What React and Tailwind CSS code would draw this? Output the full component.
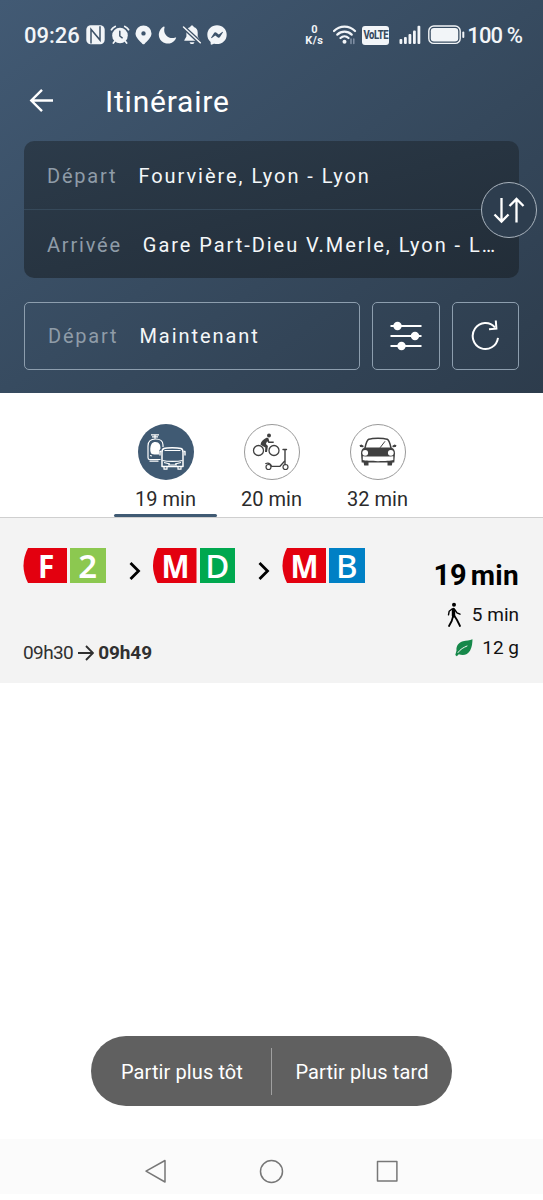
import { FaFacebookMessenger } from 'react-icons/fa';

const MODES = [
  { id: 'transit', label: '19 min', icon: <TransitIcon />, active: true },
  { id: 'bike', label: '20 min', icon: <BikeIcon /> },
  { id: 'car', label: '32 min', icon: <CarIcon /> },
];

const LEGS = [
  { type: 'F', line: '2', color: 'bg-[#8cc850]', weight: 'font-semibold' },
  { type: 'M', line: 'D', color: 'bg-[#00a84f]', weight: 'font-medium' },
  { type: 'M', line: 'B', color: 'bg-[#0080c5]', weight: 'font-medium' },
];

function TransitIcon() {
  return (
    <svg width="56" height="56" viewBox="0 0 56 56" fill="none" stroke="#fff" strokeWidth="1.2" strokeLinejoin="round">
      <path d="M13 10.8h8M14 12.8h6M17 10.8v4" />
      <path d="M22.5 35.5h-11c-1 0-1.500-.8-1.500-2V22c0-5 3-7 7.500-7s7.500 2 7.500 6v2" />
      <path d="M13.500 20c1-1.500 2.300-2 4-2s3.500.8 4.300 2.500c.7 2 .7 3 .7 4-2 2.500-1.500 4-1.500 6-4 0-6.500.3-8-1.200-1.300-3-.8-6.800.5-9.300z" fill="#fff" stroke="none" />
      <path d="M11.500 37.200h9M12 31.500l2 .5" />
      <path d="M26 24.500c3-1 13-1 17 0 1.500.5 2 2 2 4v14H24v-14c0-2 .5-3.500 2-4z" strokeWidth="1.500" fill="#405a73" />
      <path d="M26.500 26.500h16M24.500 36.500c5 1.200 15 1.200 20 0M26 38.500l6 1.500M43 38.500l-6 1.500M30 41h9" />
      <path d="M23.500 27.500h-1.500v4M45.500 27.500H47v4" strokeWidth="1.400" />
      <path d="M26 43v2.200h3V43M40 43v2.200h3V43" />
    </svg>
  );
}

function BikeIcon() {
  return (
    <svg width="56" height="56" viewBox="0 0 56 56" fill="none" stroke="#404040" strokeLinecap="round" strokeLinejoin="round">
      <circle cx="14.500" cy="26.500" r="5" strokeWidth="1.300" />
      <circle cx="30" cy="26.500" r="5" strokeWidth="1.300" />
      <circle cx="25" cy="11.500" r="2" fill="#404040" stroke="none" />
      <path d="M16.500 20.500c.5-3 3-5.500 6-6.700.8-.4 1.800 0 2 .8l.8 2.800h4.400v1.500h-5.200l-1.400-1.700-1.200 2.800 2 2-.9 6h-2l.3-4.600-3.500-1.800z" fill="#404040" stroke="none" />
      <path d="M42.500 25.500h-3.500M41 25.800v15" strokeWidth="1.400" />
      <circle cx="24.500" cy="43" r="2.500" strokeWidth="1.200" />
      <circle cx="41.500" cy="43" r="2.500" strokeWidth="1.200" />
      <path d="M21.800 39.500c2.700-.8 4.700 0 5.700 2.800h8.500l4.500-5" strokeWidth="1.300" />
    </svg>
  );
}

function CarIcon() {
  return (
    <svg width="56" height="56" viewBox="0 0 56 56" fill="none" stroke="#404040">
      <path d="M15 24c1-5 2.300-8 3.800-8.700 4-1.500 14.400-1.500 18.400 0 1.500.7 2.800 3.700 3.800 8.700" strokeWidth="1.500" />
      <path d="M35 17.300l-5 6.500" strokeWidth="1" />
      <path d="M14.500 23.500h27c2.500 1.300 3.500 3 3.500 6l-.7 9H11.700L11 29.500c0-3 1-4.700 3.500-6z" fill="#404040" stroke="none" />
      <path d="M12.800 32.300c4 .4 26.500.4 30.500 0v3.700c-4 1.500-26.500 1.500-30.500 0z" fill="#fff" stroke="none" />
      <circle cx="15.200" cy="28.800" r="2.900" fill="#fff" stroke="none" />
      <circle cx="40.800" cy="28.800" r="2.900" fill="#fff" stroke="none" />
      <path d="M13.500 38h5v3.400h-4.300zM37.500 38h5l-.7 3.400h-4.300z" fill="#404040" stroke="none" />
      <path d="M13.500 23.300l-3.300-.3-.7-1.800 2-.8 2 1.300zM42.500 23.300l3.300-.3.700-1.800-2-.8-2 1.300z" fill="#404040" stroke="none" />
    </svg>
  );
}

function StatusBar() {
  return (
    <div className="flex h-[70px] items-center pl-6 text-[22px] font-medium text-[#f2f5f8]">
      <span className="w-[62px]">09:26</span>
      {/* Notifications */}
      <div className="flex items-center gap-[5px]">
        <svg width="19" height="20" viewBox="0 0 19 20">
          <rect x=".3" y=".3" width="18.400" height="19" rx="4.500" fill="currentColor" />
          <path d="M5 18.500V4.200l8 9.600M14 1.200v14L6 5.600" fill="none" stroke="#3d5268" strokeWidth="1.500" />
        </svg>
        <svg width="20" height="20" viewBox="0 0 21 20" fill="none" stroke="currentColor" strokeWidth="1.800" strokeLinecap="round">
          <circle cx="10.500" cy="10.500" r="8.200" fill="currentColor" stroke="none" />
          <path d="M1.500 4.500C2.500 2.800 3.700 1.800 5.500 1M19.500 4.500c-1-1.700-2.200-2.700-4-3.500M5 16.500l-1.500 2M16 16.500l1.500 2" />
          <path d="M10.300 6v5l2.500 2" stroke="#3d5268" strokeWidth="1.500" />
        </svg>
        <svg width="17" height="20" viewBox="0 0 17 20">
          <path d="M8.500.5A8 8 0 0 0 .5 8.500c0 4 4.500 7.700 7 10.400.6.600 1.400.6 2 0 2.500-2.700 7-6.400 7-10.400A8 8 0 0 0 8.500.500zm0 5.700a2.200 2.200 0 1 1 0 4.400 2.200 2.200 0 0 1 0-4.400z" fill="currentColor" />
        </svg>
        <svg className="ml-px" width="19" height="20" viewBox="0 0 19 20">
          <path d="M5.700 1.600a9 9 0 1 0 12.400 11.500c.2-.5-.2-.8-.7-.6C10.800 15 4.500 9.300 6.600 2.300c.1-.6-.4-.9-.9-.7z" fill="currentColor" />
        </svg>
        <svg width="20" height="20" viewBox="0 0 20 20">
          <path d="M10 .5c1 0 1.500.6 1.700 1.400 2.600.7 4 2.700 4 5.600v4l2 3.400c.2.500 0 .8-.5.800H2.800c-.5 0-.7-.4-.4-.8l2-3.400v-4c0-2.900 1.300-4.900 3.900-5.600C8.500 1.100 9 .500 10 .500zM7.600 17.200h4.800c-.3 1.200-1.100 1.900-2.400 1.900s-2.100-.7-2.400-1.900z" fill="currentColor" />
          <path d="M1.200 1.800L18.300 17.800" stroke="#3d5268" strokeWidth="4" />
          <path d="M1.500 2L18.300 17.800" stroke="currentColor" strokeWidth="1.500" strokeLinecap="round" />
        </svg>
        <FaFacebookMessenger size={20} />
      </div>

      {/* Connectivity */}
      <div className="ml-auto flex items-center pr-[21px]">
        <div className="mr-[9px] flex w-5 flex-col items-center text-[11px] leading-[11px] font-bold">
          <span>0</span>
          <span className="tracking-[0.500px]">K/s</span>
        </div>
        <svg className="mr-[5px]" width="24" height="20" viewBox="0 0 24 20" fill="none" stroke="currentColor" strokeWidth="2.200" strokeLinecap="round">
          <path d="M1 6c5.800-5.800 15.200-5.800 21 0M4.300 9.600c4-4 10.400-4 14.400 0M7.500 13c2.300-2.300 5.700-2.300 8 0" />
          <circle cx="11.500" cy="16.800" r="2" fill="currentColor" stroke="none" />
          <path d="M18 14v4.500M20.800 14v4.500" stroke="#8796aa" strokeWidth="1.400" />
        </svg>
        <span className="flex h-[19px] w-[27px] items-center justify-center rounded-[3px] bg-[#f2f5f8] text-[#374a5e]">
          <span className="scale-y-125 text-[9.500px] font-extrabold tracking-[-0.400px]">VoLTE</span>
        </span>
        <svg className="ml-[10px]" width="22" height="20" viewBox="0 0 22 20" fill="currentColor">
          <rect x=".5" y="14" width="2.800" height="5" rx="1" />
          <rect x="5" y="12" width="2.800" height="7" rx="1" />
          <rect x="9.500" y="9" width="2.800" height="10" rx="1" />
          <rect x="14" y="5.500" width="2.800" height="13.500" rx="1" />
          <rect x="18.500" y=".8" width="2.800" height="18.200" rx="1" />
        </svg>
        <svg className="mr-[2px] ml-[7px]" width="37" height="20" viewBox="0 0 37 20">
          <rect x=".8" y="1" width="31.400" height="17.400" rx="5" fill="none" stroke="currentColor" strokeWidth="1.400" />
          <rect x="2.800" y="3" width="27.400" height="13.400" rx="3.200" fill="currentColor" />
          <path d="M35.300 7.500v4.500" stroke="currentColor" strokeWidth="2" strokeLinecap="round" />
        </svg>
        <span className="tracking-[-0.900px]">100 %</span>
      </div>
    </div>
  );
}

function Field({ label, value, className = '' }) {
  return (
    <div className={`flex items-center gap-[21px] pl-[23px] text-[20px] whitespace-nowrap ${className}`}>
      <span className="tracking-[1.800px] text-[#8f9ca8]">{label}</span>
      <span className="tracking-[1.950px] text-[#f4f7f9]">{value}</span>
    </div>
  );
}

function LineBadge({ type, line, color, weight }) {
  return (
    <div className="flex h-[35px] gap-[3px] font-['Noto_Sans'] text-[33px] leading-none text-white">
      <span className="flex w-[44px] items-center justify-center bg-[#e3000f] pl-[2px] font-bold [clip-path:path('M5_0Q-4_17.5_5_35H44V0Z')]">
        <span className="scale-x-90">{type}</span>
      </span>
      <span className={`flex w-[35.5px] items-center justify-center ${color} ${weight}`}>{line}</span>
    </div>
  );
}

export default function App() {
  return (
    <div className="flex h-[1200px] w-[543px] flex-col overflow-hidden bg-white font-['Roboto','Liberation_Sans',sans-serif]">
      <header className="flex h-[393px] shrink-0 flex-col bg-linear-to-br from-[#425a74] via-[#374b60] to-[#2d3c4c]">
        <StatusBar />

        <div className="flex h-[60px] items-center pl-[29px] text-white">
          <svg width="25" height="25" viewBox="0 0 25 25" fill="none" stroke="currentColor" strokeWidth="2.400">
            <path d="M24 12.500H2.500M13 1.800L2.300 12.500 13 23.200" />
          </svg>
          <h1 className="mt-[2px] ml-[51px] text-[30px] tracking-[0.800px]">Itinéraire</h1>
        </div>

        {/* Origin / destination */}
        <div className="relative mx-6 mt-[11px] h-[137px] w-[495px] rounded-[10px] bg-linear-to-br from-[#2c3b4a] to-[#222d38]">
          <Field label="Départ" value="Fourvière, Lyon - Lyon" className="h-[69px] border-b border-[#36495a] pt-px" />
          <Field label="Arrivée" value="Gare Part-Dieu V.Merle, Lyon - L…" className="h-[68px] pt-px" />
          <button className="absolute top-[41px] -right-[18px] flex size-14 items-center justify-center rounded-full border border-[#a9b3bd] bg-[#2d3d4e]">
            <svg width="32" height="28" viewBox="0 0 32 28" fill="none" stroke="#fff" strokeWidth="2.300">
              <path d="M8.500 2v23M1.500 18.500l7 7 7-7M23.500 26.500V3M16.500 10l7-7 7 7" />
            </svg>
          </button>
        </div>

        {/* Departure time and filters */}
        <div className="mx-6 mt-6 flex h-[68px] gap-3">
          <Field label="Départ" value="Maintenant" className="w-[336px] rounded-[5px] border border-[#8d9eae]" />
          <button className="flex w-[68px] items-center justify-center rounded-[5px] border border-[#8d9eae]">
            <svg width="32" height="30" viewBox="0 0 32 30" fill="#fff" stroke="#fff" strokeWidth="1.800">
              <path d="M.5 5h31M.5 15h31M.5 25h31" />
              <circle cx="7.500" cy="5" r="3.300" />
              <circle cx="25" cy="15" r="3.300" />
              <circle cx="11.500" cy="25" r="3.300" />
            </svg>
          </button>
          <button className="flex w-[67px] items-center justify-center rounded-[5px] border border-[#8d9eae]">
            <svg width="30" height="32" viewBox="0 0 30 32" fill="none" stroke="#fff" strokeWidth="2">
              <path d="M27 17.800A12.700 13 0 1 1 24 7.500" />
              <path d="M24.800.5l.6 8.200-7.400.6" />
            </svg>
          </button>
        </div>
      </header>

      {/* Transport modes */}
      <nav className="flex h-[125px] shrink-0 justify-center gap-[3px] border-b border-[#cfcfcf] pt-[31px]">
        {MODES.map(m => (
          <div key={m.id} className="flex w-[103px] flex-col items-center">
            <span className={`flex size-14 items-center justify-center rounded-full ${m.active ? 'bg-[#405a73]' : 'border border-[#9a9a9a]'}`}>
              <span className="shrink-0">{m.icon}</span>
            </span>
            <span className="mt-[5px] h-[29px] text-[20px] leading-[29px] text-[#2b2b2b]">{m.label}</span>
            {m.active && <span className="h-[3px] w-full rounded-full bg-[#405a73]" />}
          </div>
        ))}
      </nav>

      {/* Journey */}
      <section className="flex h-[165px] shrink-0 justify-between bg-[#f3f3f3] pr-6 pl-[23px]">
        <div className="flex flex-col">
          <div className="mt-[30px] flex">
            {LEGS.map((leg, i) => (
              <div key={i} className="flex">
                {i > 0 && (
                  <svg className="mt-[13px] mr-3 ml-[23px]" width="12" height="20" viewBox="0 0 12 20" fill="none" stroke="#000" strokeWidth="2.800">
                    <path d="M1.500 2l8 8-8 8" />
                  </svg>
                )}
                <LineBadge {...leg} />
              </div>
            ))}
          </div>
          <div className="mt-[58px] flex items-center text-[19px] leading-6 text-[#303030]">
            <span className="tracking-[-0.600px]">09h30</span>
            <svg className="mr-1 ml-[5px]" width="16" height="16" viewBox="0 0 16 16" fill="none" stroke="currentColor" strokeWidth="1.900">
              <path d="M0 8h14.500M8 1l7 7-7 7" />
            </svg>
            <span className="font-bold tracking-[-0.100px]">09h49</span>
          </div>
        </div>

        <div className="flex flex-col items-end pt-10 text-[19px] text-[#111]">
          <div className="flex items-baseline gap-1 leading-[34px] font-bold text-black">
            <span className="text-[29px]">19</span>
            <span className="text-[28px] tracking-[0.300px]">min</span>
          </div>
          <div className="mt-[6px] flex h-8 items-center gap-[10px]">
            <svg width="16" height="26" viewBox="0 0 16 26" fill="none" stroke="#000" strokeLinecap="round" strokeLinejoin="round">
              <circle cx="8" cy="2.800" r="2" fill="#000" stroke="none" />
              <path d="M7.500 7.500v6.500" strokeWidth="3.400" />
              <path d="M6 7L3.200 9.200l-.7 3.600M9 8l2 2.800 3 1.400" strokeWidth="1.400" />
              <path d="M6.700 15.500l-1 3.500-2.700 5M8.500 14l2.500 4 3 6" strokeWidth="1.800" />
            </svg>
            <span>5 min</span>
          </div>
          <div className="mt-px flex h-8 items-center gap-[9px]">
            <svg width="18" height="18" viewBox="0 0 18 18" fill="#16884a">
              <path d="M17.500.3c-3 1.500-6 1-9.500 2C3.800 3.700 1 6.800 1.500 11.500L.3 16l1.500 1.200 2-2c4.700 1.800 8.900.3 11.200-3.500C17.200 8 17.300 4 17.500.3z" />
              <path d="M3 13.500C5.500 10 8.500 8.500 12 7" fill="none" stroke="#f3f3f3" strokeWidth="1" strokeLinecap="round" />
            </svg>
            <span>12 g</span>
          </div>
        </div>
      </section>

      {/* Earlier / later */}
      <div className="mt-auto mb-[33px] ml-[91px] flex h-[70px] w-[361px] shrink-0 items-center rounded-full bg-[#606060] text-[20px] whitespace-nowrap text-white">
        <button className="w-[180px] pt-px pl-[2px] tracking-[0.100px]">Partir plus tôt</button>
        <span className="h-[47px] w-px bg-[#a0a0a0]" />
        <button className="w-[180px] pt-px tracking-[0.100px]">Partir plus tard</button>
      </div>

      {/* Android navigation */}
      <footer className="mb-[6px] flex h-[55px] shrink-0 justify-center gap-[91px] bg-[#fbfbfb] pt-5">
        {['M22 1.500v21.500L3 12.200z', 'M12.500 1.500a11 11 0 1 1 0 22 11 11 0 0 1 0-22z', 'M2.500 2.500h19.400v19.400H2.500z'].map(d => (
          <svg key={d} width="25" height="25" viewBox="0 0 25 25" fill="none" stroke="#777" strokeWidth="1.500" strokeLinejoin="round">
            <path d={d} />
          </svg>
        ))}
      </footer>
    </div>
  );
}
